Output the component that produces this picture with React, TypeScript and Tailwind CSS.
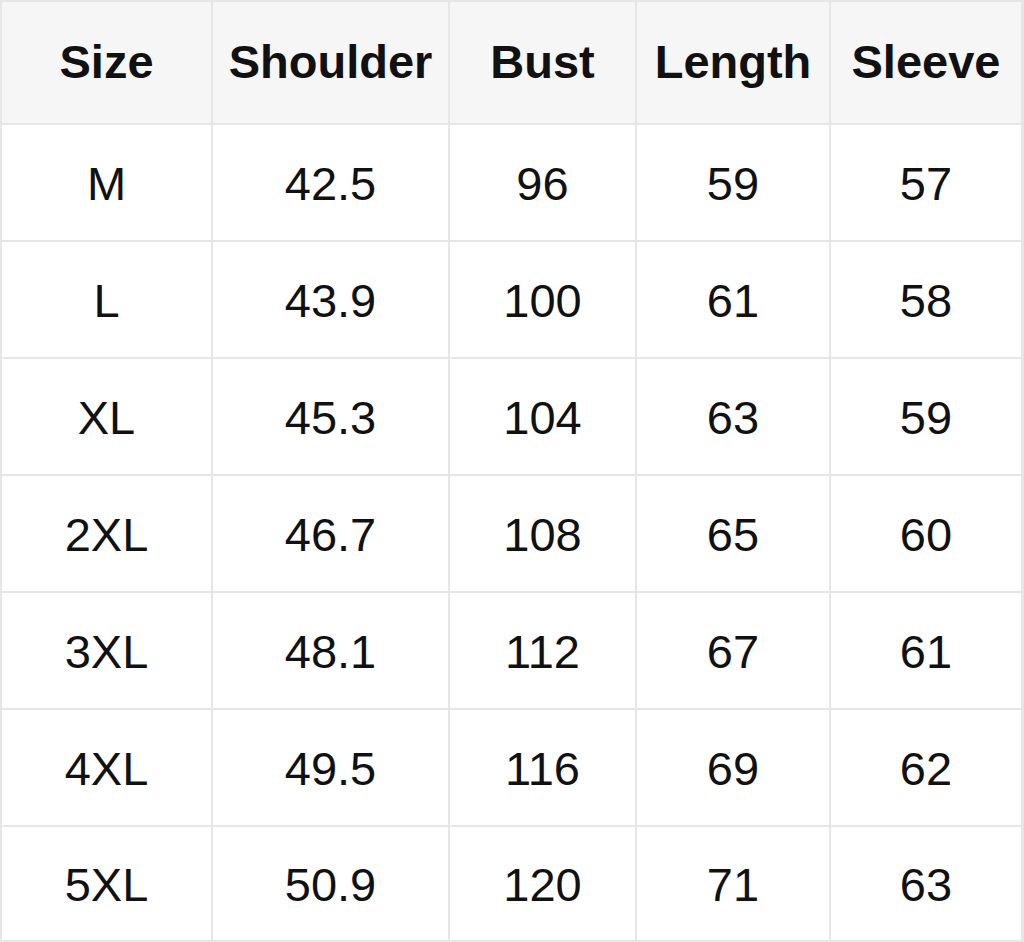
const headers = ["Size", "Shoulder", "Bust", "Length", "Sleeve"];

const rows = [
  ["M", "42.5", "96", "59", "57"],
  ["L", "43.9", "100", "61", "58"],
  ["XL", "45.3", "104", "63", "59"],
  ["2XL", "46.7", "108", "65", "60"],
  ["3XL", "48.1", "112", "67", "61"],
  ["4XL", "49.5", "116", "69", "62"],
  ["5XL", "50.9", "120", "71", "63"],
];

export default function App() {
  return (
    <div className="w-[1024px] h-[942px] bg-white font-['Liberation_Sans',Arial,sans-serif] text-[#111]">
      <div className="grid h-full grid-cols-[209px_235px_185px_192px_190px] grid-rows-[121px_repeat(6,115px)_113px] gap-[2px] bg-[#e6e6e6] pt-[2px] pb-[2px] pl-[2px] pr-[3px]">
        {headers.map((h) => (
          <div key={h} className="flex items-center justify-center bg-[#f6f6f6] text-[47px] font-bold">
            {h}
          </div>
        ))}
        {rows.map((r) =>
          r.map((c, i) => (
            <div key={r[0] + i} className="flex items-center justify-center bg-white pt-[3px] text-[47px]">
              {c}
            </div>
          ))
        )}
      </div>
    </div>
  );
}
